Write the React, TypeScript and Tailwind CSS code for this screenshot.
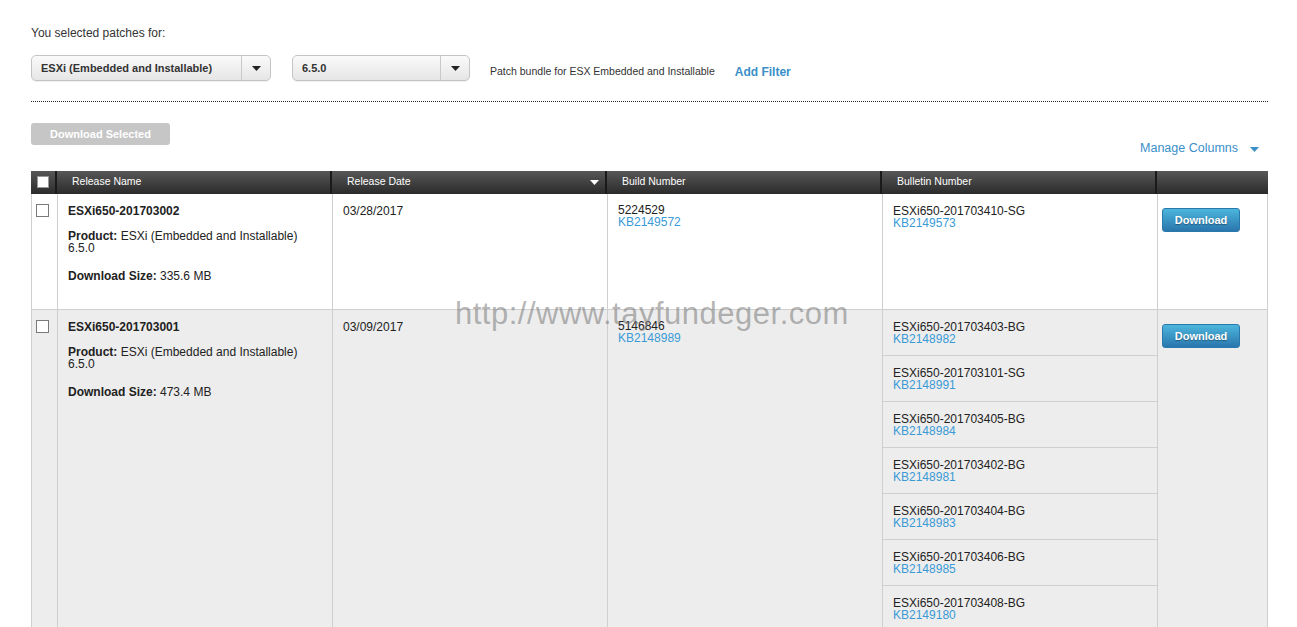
import React from "react";

const font = { fontFamily: '"Liberation Sans", Arial, sans-serif' };

function Caret({ className = "" }: { className?: string }) {
  return (
    <svg width="9" height="5" viewBox="0 0 9 5" className={className}>
      <path d="M0 0 H9 L4.5 5 Z" fill="currentColor" />
    </svg>
  );
}

function Select({ label, width }: { label: string; width: string }) {
  return (
    <div
      className={`${width} h-[26px] flex items-stretch rounded-[5px] border border-[#c4c4c4] bg-gradient-to-b from-[#fafafa] to-[#e6e6e6] shadow-[0_1px_0_rgba(0,0,0,0.06)]`}
    >
      <div className="flex-1 flex items-center pl-[9px] text-[11px] font-bold text-[#333]">{label}</div>
      <div className="w-[29px] border-l border-[#c9c9c9] flex items-center justify-center text-[#222]">
        <Caret />
      </div>
    </div>
  );
}

function Checkbox() {
  return <div className="w-[13px] h-[13px] border border-[#7a7a7a] bg-white" />;
}

function DownloadBtn() {
  return (
    <div className="w-[78px] h-[24px] rounded-[3px] bg-gradient-to-b from-[#4cb6dc] to-[#2a76ad] border border-[#2a79ad] flex items-center justify-center text-white text-[11px] font-bold [text-shadow:0_1px_1px_rgba(0,0,0,0.35)]">
      Download
    </div>
  );
}

function Bulletin({ id, kb }: { id: string; kb: string }) {
  return (
    <div className="leading-[12px] text-[12px]">
      <div className="text-[#222]">{id}</div>
      <div className="text-[#3a9ad6]">{kb}</div>
    </div>
  );
}

const bulletins2: [string, string][] = [
  ["ESXi650-201703403-BG", "KB2148982"],
  ["ESXi650-201703101-SG", "KB2148991"],
  ["ESXi650-201703405-BG", "KB2148984"],
  ["ESXi650-201703402-BG", "KB2148981"],
  ["ESXi650-201703404-BG", "KB2148983"],
  ["ESXi650-201703406-BG", "KB2148985"],
  ["ESXi650-201703408-BG", "KB2149180"],
];

function NameCell({ name, size }: { name: string; size: string }) {
  return (
    <div className="pl-[10px] pt-[10px] text-[12px] text-[#222]">
      <div className="font-bold leading-[14px]">{name}</div>
      <div className="mt-[12px] leading-[12px]">
        <span className="font-bold">Product:</span> ESXi (Embedded and Installable)
        <br />
        6.5.0
      </div>
      <div className="mt-[15px] leading-[14px]">
        <span className="font-bold">Download Size:</span> {size}
      </div>
    </div>
  );
}

export default function App() {
  return (
    <div className="relative w-[1297px] h-[627px] overflow-hidden bg-white" style={font}>
      <div className="pl-[31px] pr-[29px] pt-[26px]">
        <div className="text-[12px] text-[#333] leading-[14px]">You selected patches for:</div>
        <div className="mt-[15px] flex items-center">
          <Select label="ESXi (Embedded and Installable)" width="w-[240px]" />
          <div className="w-[21px]" />
          <Select label="6.5.0" width="w-[178px]" />
          <div className="ml-[20px] text-[10.5px] text-[#333] pt-[8px]">Patch bundle for ESX Embedded and Installable</div>
          <div className="ml-[20px] text-[12px] font-bold text-[#3a8fc8] pt-[7px]">Add Filter</div>
        </div>
        <div className="mt-[20px] border-t border-dotted border-[#222]" />
        <div className="mt-[21px] w-[139px] h-[22px] rounded-[3px] bg-[#c6c6c6] flex items-center justify-center text-[11px] font-bold text-white">
          Download Selected
        </div>
        <div className="-mt-[6px] flex justify-end items-center pr-[9px] text-[12.5px] text-[#3a8fc8]">
          <span>Manage Columns</span>
          <Caret className="ml-[12px] mt-[2px] text-[#3a8fc8]" />
        </div>

        {/* table */}
        <div className="mt-[13px]">
          <div className="grid grid-cols-[26px_275px_275px_275px_275px_111px] h-[23px] bg-gradient-to-b from-[#585858] to-[#2b2b2b] text-white text-[10.5px] items-stretch">
            <div className="flex items-center justify-center border-r-2 border-[#1a1a1a]">
              <div className="w-[12px] h-[12px] bg-white border border-[#999]" />
            </div>
            <div className="flex items-center pl-[15px] border-r-2 border-[#1a1a1a]">Release Name</div>
            <div className="flex items-center justify-between pl-[15px] pr-[6px] border-r-2 border-[#1a1a1a]">
              <span>Release Date</span>
              <Caret />
            </div>
            <div className="flex items-center pl-[15px] border-r-2 border-[#1a1a1a]">Build Number</div>
            <div className="flex items-center pl-[15px] border-r-2 border-[#1a1a1a]">Bulletin Number</div>
            <div />
          </div>

          {/* row 1 */}
          <div className="grid grid-cols-[26px_275px_275px_275px_275px_111px] h-[116px] bg-white border-b border-[#cfcfcf] border-l border-r">
            <div className="border-r border-[#cfcfcf] pl-[4px] pt-[10px]">
              <Checkbox />
            </div>
            <div className="border-r border-[#cfcfcf]">
              <NameCell name="ESXi650-201703002" size="335.6 MB" />
            </div>
            <div className="border-r border-[#cfcfcf] pl-[10px] pt-[10px] text-[12px] text-[#222] leading-[14px]">03/28/2017</div>
            <div className="border-r border-[#cfcfcf] pl-[10px] pt-[10px] text-[12px] leading-[12px]">
              <div className="text-[#222]">5224529</div>
              <div className="text-[#3a9ad6]">KB2149572</div>
            </div>
            <div className="border-r border-[#cfcfcf] pl-[10px] pt-[11px]">
              <Bulletin id="ESXi650-201703410-SG" kb="KB2149573" />
            </div>
            <div className="pl-[4px] pt-[14px]">
              <DownloadBtn />
            </div>
          </div>

          {/* row 2 */}
          <div className="grid grid-cols-[26px_275px_275px_275px_275px_111px] bg-[#ededed] border-l border-r border-[#cfcfcf] h-[330px]">
            <div className="border-r border-[#cfcfcf] pl-[4px] pt-[10px]">
              <Checkbox />
            </div>
            <div className="border-r border-[#cfcfcf]">
              <NameCell name="ESXi650-201703001" size="473.4 MB" />
            </div>
            <div className="border-r border-[#cfcfcf] pl-[10px] pt-[10px] text-[12px] text-[#222] leading-[14px]">03/09/2017</div>
            <div className="border-r border-[#cfcfcf] pl-[10px] pt-[10px] text-[12px] leading-[12px]">
              <div className="text-[#222]">5146846</div>
              <div className="text-[#3a9ad6]">KB2148989</div>
            </div>
            <div className="border-r border-[#cfcfcf] flex flex-col">
              {bulletins2.map(([id, kb]) => (
                <div key={id} className="h-[46px] shrink-0 border-b border-[#cfcfcf] pl-[10px] pt-[11px]">
                  <Bulletin id={id} kb={kb} />
                </div>
              ))}
            </div>
            <div className="pl-[4px] pt-[14px]">
              <DownloadBtn />
            </div>
          </div>
        </div>
      </div>

      {/* watermark */}
      <div className="absolute left-[455px] top-[295px] text-[31px] leading-[38px] text-[rgba(120,120,120,0.55)] tracking-[0.5px] pointer-events-none whitespace-nowrap">
        http://www.tayfundeger.com
      </div>
    </div>
  );
}
